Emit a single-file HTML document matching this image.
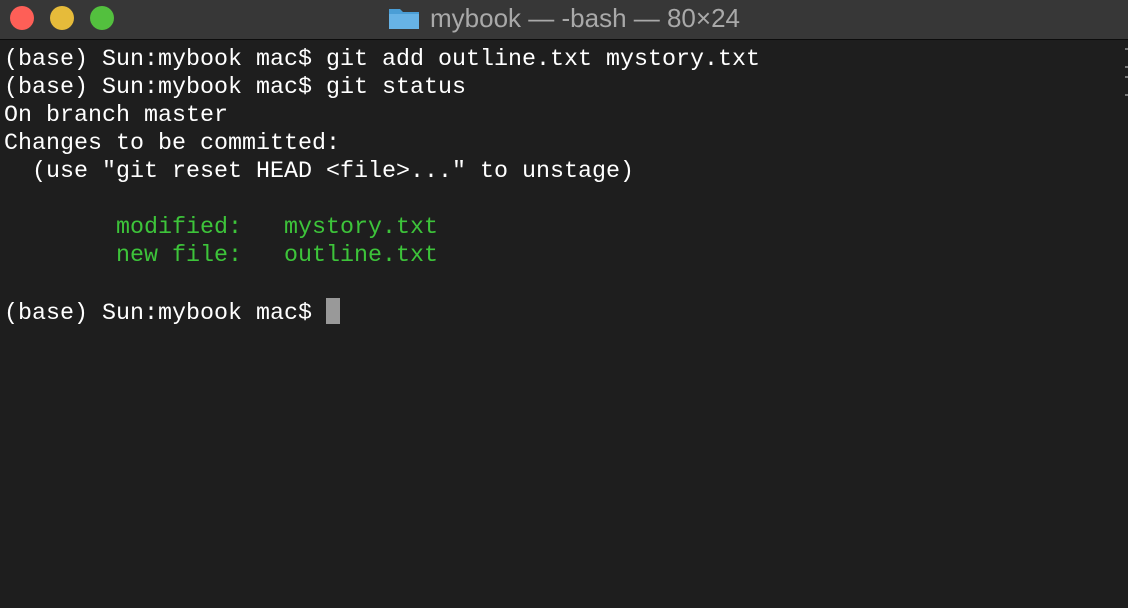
<!DOCTYPE html>
<html><head><style>
html,body{margin:0;padding:0;width:1128px;height:608px;overflow:hidden;background:#1e1e1e;}
.tb{position:absolute;left:0;top:0;width:1128px;height:39px;background:#373737;border-bottom:1px solid #0c0c0c;}
.dot{position:absolute;top:6px;width:24px;height:24px;border-radius:50%;}
.title{position:absolute;left:0;right:0;top:3px;text-align:center;font:26px "Liberation Sans",sans-serif;color:#a9a9a9;}
.term{position:absolute;left:4px;top:46px;font:23.33px/28px "Liberation Mono",monospace;color:#fff;white-space:pre;}
.g{color:#3dc43a;}
.cur{display:inline-block;width:14px;height:26px;background:#999;vertical-align:-5px;}
.m{position:absolute;width:3px;height:2px;background:#777;}
</style></head><body>
<div class="tb">
<div class="dot" style="left:10px;background:#fe5f57"></div>
<div class="dot" style="left:50px;background:#e6bb3a"></div>
<div class="dot" style="left:90px;background:#53c03e"></div>
<div class="title"><svg width="32" height="24" style="vertical-align:-3px;margin-right:10px" viewBox="0 0 32 24"><path d="M1 3h11l3 3h16v17H1z" fill="#4a9ed6"/><rect x="1" y="8" width="30" height="15" fill="#67b3e6"/></svg>mybook — -bash — 80×24</div>
</div>
<div class="m" style="left:1125px;top:48px"></div>
<div class="m" style="left:1125px;top:66px"></div>
<div class="m" style="left:1125px;top:76px"></div>
<div class="m" style="left:1125px;top:94px"></div>
<div class="term">(base) Sun:mybook mac$ git add outline.txt mystory.txt
(base) Sun:mybook mac$ git status
On branch master
Changes to be committed:
  (use "git reset HEAD &lt;file&gt;..." to unstage)

<span class="g">        modified:   mystory.txt
        new file:   outline.txt</span>

(base) Sun:mybook mac$ <span class="cur"></span></div>
</body></html>
